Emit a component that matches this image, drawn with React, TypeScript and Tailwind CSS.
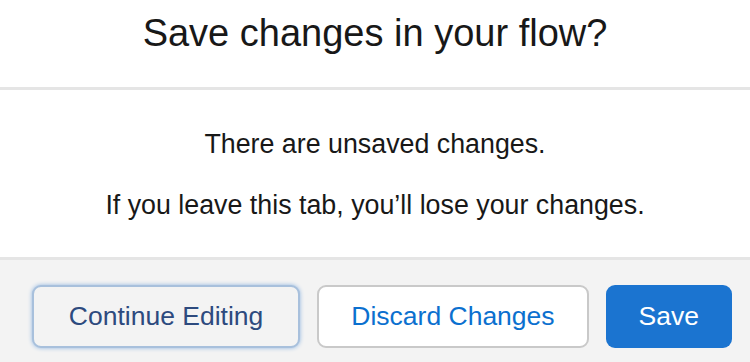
const font = { fontFamily: '"Liberation Sans", Arial, sans-serif' }

export default function App() {
  return (
    <div className="h-[362px] w-[750px] overflow-hidden bg-white text-[#181818]" style={font}>
      <header className="h-[90px] border-b-[3px] border-[#e5e5e5] pt-[14px] text-center">
        <h2 className="text-[38px] leading-[38px] text-[#181818]">Save changes in your flow?</h2>
      </header>

      <section className="flex h-[170px] flex-col items-center gap-[34px] border-b-[3px] border-[#e5e5e5] pt-[41px] text-[26.8px] leading-[27px]">
        <p>There are unsaved changes.</p>
        <p>If you leave this tab, you’ll lose your changes.</p>
      </section>

      <footer className="flex h-[102px] items-start justify-end gap-[17px] bg-[#f3f3f3] pr-[18px] pt-[25px] text-[26.5px]">
        <button className="h-[63px] rounded-[9px] border-2 border-[#a8c0dc] bg-[#f3f3f3] px-[35px] text-[#2d4a7e] shadow-[0_0_4px_#8fb5e0]">
          Continue Editing
        </button>
        <button className="h-[63px] rounded-[9px] border-2 border-[#c9c9c9] bg-white px-[32px] text-[#0b70cf]">
          Discard Changes
        </button>
        <button className="h-[63px] rounded-[9px] bg-[#1b74d0] px-[33px] text-white">
          Save
        </button>
      </footer>
    </div>
  )
}
